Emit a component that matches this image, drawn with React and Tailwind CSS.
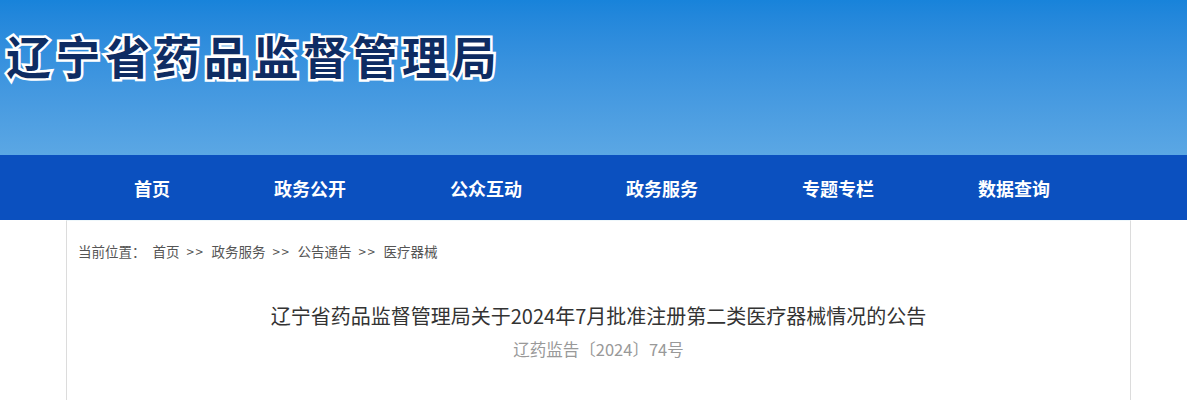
import React from "react";

const navItems = ["首页", "政务公开", "公众互动", "政务服务", "专题专栏", "数据查询"];
const crumbs = ["首页", "政务服务", "公告通告", "医疗器械"];

function App() {
  return (
    <div className="w-[1187px] min-h-[400px] bg-white font-['Microsoft_YaHei','Noto_Sans_CJK_SC',sans-serif]">
      {/* 头部 banner */}
      <div className="h-[155px] bg-gradient-to-b from-[#1883da] to-[#5ba7e4] pt-[24px] pl-[6px]">
        <h1 className="text-[45px] font-bold leading-[64px] tracking-[4.5px] text-[#0e2c63] [-webkit-text-stroke:5px_white] [paint-order:stroke_fill]">
          辽宁省药品监督管理局
        </h1>
      </div>

      {/* 导航 */}
      <div className="h-[65px] bg-[#0b50bf] flex items-center gap-[104px] pl-[134px]">
        {navItems.map((item) => (
          <div key={item} className="text-white text-[18px] font-bold leading-[24px]">
            {item}
          </div>
        ))}
      </div>

      {/* 正文 */}
      <div className="mx-[66px] w-[1065px] h-[180px] border-x border-[#dcdcdc] border-t border-t-[#eef7fb] px-[11px]">
        <div className="pt-[20px] flex items-center gap-[7px] text-[13.5px] text-[#555] leading-[20px]">
          <span>当前位置：</span>
          {crumbs.map((c, i) => (
            <React.Fragment key={c}>
              {i > 0 && <span className="tracking-[1.5px]">&gt;&gt;</span>}
              <span>{c}</span>
            </React.Fragment>
          ))}
        </div>
        <div className="mt-[41px] text-center text-[20px] text-[#333] leading-[28px]">
          辽宁省药品监督管理局关于2024年7月批准注册第二类医疗器械情况的公告
        </div>
        <div className="mt-[7px] text-center text-[16.5px] text-[#999] leading-[24px]">
          辽药监告〔2024〕74号
        </div>
      </div>
    </div>
  );
}

export default App;
